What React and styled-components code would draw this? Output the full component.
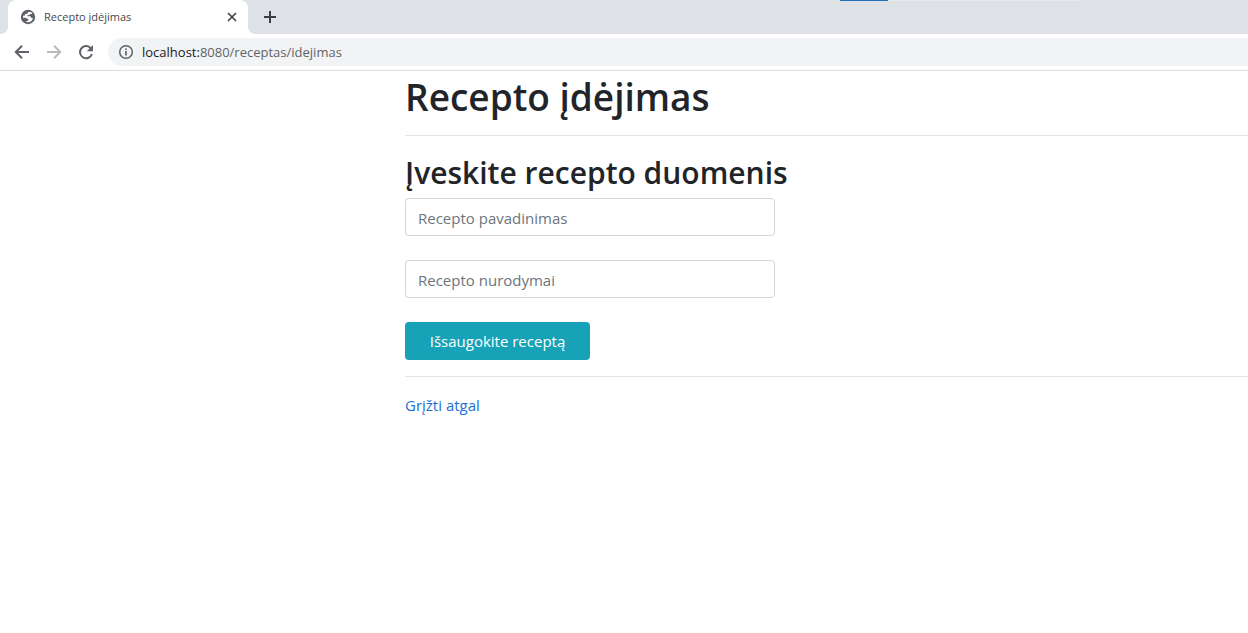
import React from "react";
import styled, { createGlobalStyle } from "styled-components";

const GlobalStyle = createGlobalStyle`
  *, *::before, *::after { box-sizing: border-box; }
  body {
    margin: 0;
    background: #fff;
    color: #212529;
    font-family: "Segoe UI", "Open Sans", "Noto Sans", sans-serif;
    font-size: 15px;
    line-height: 24px;
    overflow-x: hidden;
  }
`;

const TabStrip = styled.header`
  position: relative;
  display: flex;
  align-items: flex-end;
  height: 34px;
  padding-left: 8px;
  background: #dee1e6;
`;

const WindowEdge = styled.span`
  position: absolute;
  top: 0;
  left: 840px;
  display: flex;
  width: 240px;
  height: 1px;
  background: linear-gradient(to right, #1f6fb8 48px, #e6e9ec 48px);
`;

const Tab = styled.div`
  position: relative;
  display: flex;
  align-items: center;
  width: 240px;
  height: 34px;
  padding: 0 8px 0 12px;
  border-radius: 8px 8px 0 0;
  background: #fff;

  &::before, &::after {
    content: "";
    position: absolute;
    bottom: 0;
    width: 8px;
    height: 8px;
  }
  &::before {
    right: 100%;
    background: radial-gradient(circle at 0 0, transparent 8px, #fff 8px);
  }
  &::after {
    left: 100%;
    background: radial-gradient(circle at 100% 0, transparent 8px, #fff 8px);
  }
`;

const TabTitle = styled.span`
  flex: 1;
  margin-left: 8px;
  color: #45494d;
  font-size: 11px;
  line-height: 16px;
  white-space: nowrap;
`;

const IconButton = styled.button`
  display: flex;
  align-items: center;
  justify-content: center;
  flex: none;
  width: ${(p) => p.$size}px;
  height: ${(p) => p.$size}px;
  padding: 0;
  border: 0;
  border-radius: 50%;
  background: transparent;
  color: ${(p) => p.$color || "#5f6368"};
`;

const NewTab = styled(IconButton)`
  align-self: center;
  margin-left: 8px;
`;

const Toolbar = styled.nav`
  display: flex;
  align-items: center;
  gap: 4px;
  height: 37px;
  padding-left: 8px;
  border-bottom: 1px solid #dadce0;
  background: #fff;
`;

const AddressBar = styled.div`
  display: flex;
  align-items: center;
  flex: 1;
  gap: 8px;
  height: 28px;
  margin-left: 4px;
  padding-left: 10px;
  border-radius: 14px 0 0 14px;
  background: #f1f3f4;
  color: #5f6368;
  font-size: 13px;
  line-height: 20px;
`;

const Host = styled.span`
  color: #202124;
`;

const Page = styled.main`
  padding-left: 405px;
`;

const Title = styled.h1`
  margin: 0 0 8px;
  padding-top: 4px;
  font-size: 37px;
  font-weight: 600;
  line-height: 44px;
`;

const Subtitle = styled.h2`
  margin: 0 0 8px;
  padding-top: 4px;
  font-size: 30px;
  font-weight: 600;
  line-height: 34px;
`;

const Divider = styled.hr`
  margin: 16px 0;
  border: 0;
  border-top: 1px solid #e5e5e5;
`;

const Form = styled.form`
  display: flex;
  flex-direction: column;
  gap: 24px;
  max-width: 370px;
`;

const TextInput = styled.input`
  width: 100%;
  height: 38px;
  padding: 8px 12px 6px;
  border: 1px solid #ced4da;
  border-radius: 4px;
  background: #fff;
  color: #495057;
  font: inherit;

  &::placeholder { color: #6c757d; opacity: 1; }
`;

const SubmitButton = styled.button`
  width: 50%;
  height: 38px;
  padding: 0;
  border: 0;
  border-radius: 4px;
  background: #17a2b8;
  color: #fff;
  font: inherit;
  white-space: nowrap;
`;

const BackLink = styled.a`
  color: #1a6fd6;
  text-decoration: none;
`;

const GlobeIcon = () => (
  <svg width="16" height="16" viewBox="0 0 16 16" aria-hidden="true">
    <circle cx="8" cy="8" r="7.200" fill="#5f6368" />
    <path
      d="M8.200 3.200C9.700 2.600 11.300 3 12.300 4.100L11.600 5H9.900L9.600 6H7.600L7.400 7.300H9.600C10.900 7.300 11.200 8.200 11.200 9H12.900C12.700 11.300 10.800 13 8.200 13.200L6.400 12.900V12L8.300 11.700V9.800L6.600 9.500 5.800 8.700H3.100C2.900 8.100 3 7.400 3.200 6.800L5 6.500 5.200 5 7.400 4.700z"
      fill="#fff"
    />
  </svg>
);

const CloseIcon = () => (
  <svg width="16" height="16" viewBox="0 0 16 16" aria-hidden="true">
    <path d="M4 4l8 8M12 4l-8 8" stroke="currentColor" strokeWidth="1.6" />
  </svg>
);

const PlusIcon = () => (
  <svg width="16" height="16" viewBox="0 0 16 16" aria-hidden="true">
    <path d="M8 2v12M2 8h12" stroke="currentColor" strokeWidth="2" />
  </svg>
);

const BackIcon = () => (
  <svg width="20" height="20" viewBox="0 0 20 20" aria-hidden="true">
    <path d="M17 10H4.500M10 3.700 3.800 10l6.200 6.300" fill="none" stroke="currentColor" strokeWidth="2" />
  </svg>
);

const ForwardIcon = () => (
  <svg width="20" height="20" viewBox="0 0 20 20" aria-hidden="true">
    <path d="M3 10h12.500M10 3.700l6.200 6.300-6.200 6.300" fill="none" stroke="currentColor" strokeWidth="2" />
  </svg>
);

const ReloadIcon = () => (
  <svg width="20" height="20" viewBox="0 0 20 20" aria-hidden="true">
    <path d="M15.900 12A6.100 6.100 0 1 1 14.300 5.700L15.500 7" fill="none" stroke="currentColor" strokeWidth="2" />
    <path d="M17 3v6.200h-6.200z" fill="currentColor" />
  </svg>
);

const InfoIcon = () => (
  <svg width="16" height="16" viewBox="0 0 16 16" aria-hidden="true">
    <circle cx="8" cy="8" r="6.300" fill="none" stroke="currentColor" strokeWidth="1.500" />
    <path d="M8 7v4.500M8 4.500v1.600" stroke="currentColor" strokeWidth="1.700" />
  </svg>
);

export default function App() {
  return (
    <>
      <GlobalStyle />
      <TabStrip>
        <Tab>
          <GlobeIcon />
          <TabTitle>Recepto įdėjimas</TabTitle>
          <IconButton type="button" aria-label="Uždaryti kortelę" $size={16} $color="#3c4043">
            <CloseIcon />
          </IconButton>
        </Tab>
        <NewTab type="button" aria-label="Nauja kortelė" $size={28} $color="#3c4043">
          <PlusIcon />
        </NewTab>
        <WindowEdge />
      </TabStrip>
      <Toolbar>
        <IconButton type="button" aria-label="Atgal" $size={28}>
          <BackIcon />
        </IconButton>
        <IconButton type="button" aria-label="Pirmyn" $size={28} $color="#b9bbbe">
          <ForwardIcon />
        </IconButton>
        <IconButton type="button" aria-label="Įkelti iš naujo" $size={28}>
          <ReloadIcon />
        </IconButton>
        <AddressBar>
          <InfoIcon />
          <span>
            <Host>localhost:</Host>8080/receptas/idejimas
          </span>
        </AddressBar>
      </Toolbar>
      <Page>
        <Title>Recepto įdėjimas</Title>
        <Divider />
        <Subtitle>Įveskite recepto duomenis</Subtitle>
        <Form onSubmit={(e) => e.preventDefault()}>
          <TextInput type="text" name="pavadinimas" aria-label="Recepto pavadinimas" placeholder="Recepto pavadinimas" />
          <TextInput type="text" name="nurodymai" aria-label="Recepto nurodymai" placeholder="Recepto nurodymai" />
          <SubmitButton type="submit">Išsaugokite receptą</SubmitButton>
        </Form>
        <Divider />
        <BackLink href="#atgal">Grįžti atgal</BackLink>
      </Page>
    </>
  );
}
